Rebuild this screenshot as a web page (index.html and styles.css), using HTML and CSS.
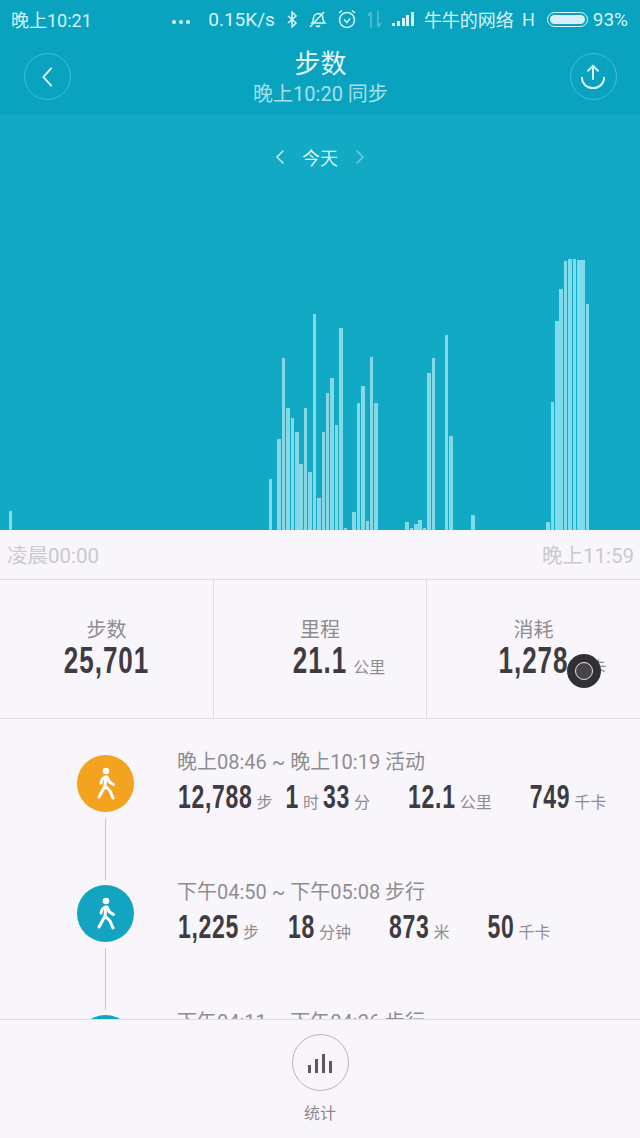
FILE: index.html
```html
<!DOCTYPE html>
<html lang="en">
<head>
    <meta charset="UTF-8">
    <title>步数</title>
    <link rel="stylesheet" href="styles.css">
</head>
<body>
    <div class="screen">
        <div class="top">
            <div class="status-bar">
                <span class="clock">晚上10:21</span>
                <div class="status-right">
                    <span class="dots"><i></i><i></i><i></i></span>
                    <span class="speed">0.15K/s</span>
                    <svg class="st-icon" width="11" height="17" viewBox="0 0 11 17"><path d="M1 5l8 7-4 4V1l4 4-8 7" fill="none" stroke="#d8f3f8" stroke-width="1.6"/></svg>
                    <svg class="st-icon" width="19" height="19" viewBox="0 0 19 19"><path d="M4 13c2-2 1-5 2-7s4-3 6-2 3 3 3 5 1 3 2 4H4zM8 15.500c1 1.500 3 1.500 4 0M2 17L16 2" fill="none" stroke="#d8f3f8" stroke-width="1.500"/></svg>
                    <svg class="st-icon" width="20" height="20" viewBox="0 0 20 20"><circle cx="10" cy="11" r="7.500" fill="none" stroke="#d8f3f8" stroke-width="1.500"/><path d="M7 10.500l3 3 3-4M2 4l3-2.500M18 4l-3-2.500" fill="none" stroke="#d8f3f8" stroke-width="1.500"/></svg>
                    <svg class="st-icon" width="15" height="19" viewBox="0 0 15 19"><path d="M4 18V3M1 6l3-4M11 1v15M14 13l-3 4" fill="none" stroke="#5cc0d3" stroke-width="1.500"/></svg>
                    <svg class="st-icon" width="22" height="14" viewBox="0 0 22 14"><path d="M0 11h3v3H0zM5 9h3v5H5zM10 6h3v8h-3zM14 3h3v11h-3zM19 0h3v14h-3z" fill="#d8f3f8"/></svg>
                    <span class="carrier">牛牛的网络</span>
                    <span class="net">H</span>
                    <span class="battery"><i></i></span>
                    <span class="percent">93%</span>
                </div>
            </div>
            <div class="header">
                <button class="round-btn">
                    <svg width="13" height="22" viewBox="0 0 14 24"><path d="M11.500 2L2.500 12l9 10" fill="none" stroke="#e6f8fb" stroke-width="2"/></svg>
                </button>
                <div class="header-title">
                    <h1>步数</h1>
                    <p>晚上10:20 同步</p>
                </div>
                <button class="round-btn">
                    <svg width="26" height="28" viewBox="0 0 28 30"><path d="M14 18V3M8 9l6-6 6 6M2 15c0 7 5 12 12 12s12-5 12-12" fill="none" stroke="#e6f8fb" stroke-width="2"/></svg>
                </button>
            </div>
        </div>

        <div class="chart">
            <div class="chart-nav">
                <svg width="10" height="16" viewBox="0 0 10 16"><path d="M8.500 1.500L2 8l6.500 6.500" fill="none" stroke="#bdeaf2" stroke-width="1.500"/></svg>
                <span>今天</span>
                <svg width="10" height="16" viewBox="0 0 10 16"><path d="M1.500 1.500L8 8l-6.500 6.500" fill="none" stroke="#6fcde0" stroke-width="1.500"/></svg>
            </div>
            <div class="bars" id="bars"></div>
        </div>

        <div class="axis">
            <span>凌晨00:00</span>
            <span>晚上11:59</span>
        </div>

        <div class="stats">
            <div class="stat">
                <div class="stat-label">步数</div>
                <div class="stat-value"><b>25,701</b></div>
            </div>
            <div class="stat">
                <div class="stat-label">里程</div>
                <div class="stat-value"><b>21.1</b><small>公里</small></div>
            </div>
            <div class="stat">
                <div class="stat-label">消耗</div>
                <div class="stat-value"><b>1,278</b><small>千卡</small></div>
            </div>
        </div>

        <div class="list">
            <div class="entry">
                <div class="rail">
                    <div class="dot dot-orange">
                        <svg width="26" height="34" viewBox="0 0 26 34"><use href="#walker"/></svg>
                    </div>
                    <div class="rail-line"></div>
                </div>
                <div class="entry-body">
                    <div class="entry-time">晚上08:46 ~ 晚上10:19 活动</div>
                    <div class="entry-nums">
                        <span class="num num-short"><b>12,788</b><small>步</small></span>
                        <span class="num"><b>1</b><small>时</small><b>33</b><small>分</small></span>
                        <span class="num"><b>12.1</b><small>公里</small></span>
                        <span class="num"><b>749</b><small>千卡</small></span>
                    </div>
                </div>
            </div>
            <div class="entry">
                <div class="rail">
                    <div class="dot dot-blue">
                        <svg width="26" height="34" viewBox="0 0 26 34"><use href="#walker"/></svg>
                    </div>
                    <div class="rail-line"></div>
                </div>
                <div class="entry-body">
                    <div class="entry-time">下午04:50 ~ 下午05:08 步行</div>
                    <div class="entry-nums">
                        <span class="num num-wide"><b>1,225</b><small>步</small></span>
                        <span class="num"><b>18</b><small>分钟</small></span>
                        <span class="num"><b>873</b><small>米</small></span>
                        <span class="num"><b>50</b><small>千卡</small></span>
                    </div>
                </div>
            </div>
            <div class="entry">
                <div class="rail">
                    <div class="dot dot-blue"></div>
                </div>
                <div class="entry-body">
                    <div class="entry-time">下午04:11 ~ 下午04:26 步行</div>
                </div>
            </div>
        </div>

        <div class="bottom">
            <div class="stats-btn">
                <svg width="24" height="20" viewBox="0 0 24 20"><path d="M0 12h3v8H0zM7 6h3v14H7zM14 1h3v19h-3zM21 8h3v12h-3z" fill="#5d5a5e"/></svg>
            </div>
            <span>统计</span>
        </div>

        <div class="float-ball"><i></i></div>
    </div>

    <svg width="0" height="0" class="defs">
        <symbol id="walker" viewBox="0 0 26 34">
            <circle cx="13" cy="4" r="3.300" fill="#fff"/>
            <path d="M12 10c-2 1-3.500 3-4 6M13 10l-1 9M14 10l2.500 5 4 2.500M12 19l-6 11M12 19l5 5 3 7" fill="none" stroke="#fff" stroke-width="3" stroke-linecap="round" stroke-linejoin="round"/>
        </symbol>
    </svg>

    <script src="chart.js"></script>
</body>
</html>
```

FILE: styles.css
```css
* {
    margin: 0;
    padding: 0;
    box-sizing: border-box;
}

body {
    width: 640px;
    height: 1138px;
    overflow: hidden;
    background: #f9f6fb;
    font-family: Roboto, "Noto Sans CJK SC", sans-serif;
}

.screen {
    position: relative;
    width: 640px;
    height: 1138px;
    display: flex;
    flex-direction: column;
}

.defs {
    position: absolute;
}

/* top blue part */
.top {
    height: 115px;
    background: #09a3c0;
    color: #e3f6fa;
}

.status-bar {
    height: 38px;
    padding: 0 12px 0 11px;
    display: flex;
    align-items: center;
    justify-content: space-between;
    font-size: 18px;
    color: #d8f3f8;
}

.status-right {
    display: flex;
    align-items: center;
}

.dots {
    display: flex;
    gap: 3px;
    margin-right: 18px;
    padding-top: 5px;
}

.dots i {
    width: 4px;
    height: 4px;
    border-radius: 50%;
    background: #e3f6fa;
}

.st-icon {
    margin-left: 10px;
}

.speed {
    margin-right: 2px;
    font-size: 19px;
}

.carrier {
    margin-left: 10px;
}

.net {
    margin-left: 8px;
}

.battery {
    width: 41px;
    height: 15px;
    margin-left: 12px;
    padding: 2px;
    border: 1px solid #e3f6fa;
    border-radius: 8px;
    display: flex;
}

.battery i {
    flex: 1;
    border-radius: 5px;
    background: #d5f1f5;
}

.percent {
    margin-left: 5px;
    font-size: 19px;
}

.header {
    height: 77px;
    padding: 0 23px 0 24px;
    display: flex;
    align-items: flex-start;
    justify-content: space-between;
}

.round-btn {
    width: 47px;
    height: 47px;
    margin-top: 15px;
    border: 1px solid #45bdd2;
    border-radius: 50%;
    background: none;
    display: flex;
    align-items: center;
    justify-content: center;
}

.header-title {
    text-align: center;
}

.header-title h1 {
    font-size: 26px;
    font-weight: 400;
    line-height: 34px;
    margin-top: 9px;
}

.header-title p {
    font-size: 20px;
    line-height: 26px;
    color: #a4e0ea;
}

/* chart */
.chart {
    height: 415px;
    background: #12a9c4;
    display: flex;
    flex-direction: column;
    justify-content: space-between;
}

.chart-nav {
    height: 24px;
    margin-top: 30px;
    display: flex;
    align-items: center;
    justify-content: center;
    gap: 17px;
    font-size: 18px;
    color: #d8f3f8;
}

.bars {
    height: 272px;
    padding-left: 4.250px;
    display: flex;
    align-items: flex-end;
    gap: 0.920px;
}

.bar {
    flex: 0 0 3.500px;
    background: #85d8e5;
}

.bar-bright {
    background: #7fdcec;
}

.axis {
    height: 49px;
    padding: 0 6px 2px 7px;
    display: flex;
    align-items: center;
    justify-content: space-between;
    font-size: 20.500px;
    color: #cbc9cc;
}

/* three totals */
.stats {
    height: 140px;
    border-top: 1px solid #dfdde0;
    border-bottom: 1px solid #dfdde0;
    display: grid;
    grid-template-columns: 214px 213px 1fr;
}

.stat {
    padding-top: 36px;
    border-right: 1px solid #dfdde0;
    text-align: center;
}

.stat:last-child {
    border-right: none;
}

.stat-label {
    font-size: 20px;
    line-height: 28px;
    color: #8f8d90;
}

/* number stays centred under the label, the unit hangs on its right */
.stat-value {
    display: grid;
    grid-template-columns: 1fr auto 1fr;
    align-items: baseline;
    margin-top: 7px;
    color: #3f3c41;
}

.stat-value b {
    grid-column: 2;
    display: inline-block;
    font-family: "Liberation Sans", sans-serif;
    font-size: 26px;
    line-height: 26px;
    letter-spacing: 1px;
    transform: scaleY(1.4);
    transform-origin: 0 80%;
}

.stat-value small {
    margin-left: 6px;
    font-size: 16px;
    text-align: left;
    white-space: nowrap;
    color: #8f8d90;
}

/* activity list */
.list {
    height: 300px;
    padding-top: 36px;
    overflow: hidden;
}

.entry {
    display: flex;
}

.rail {
    width: 57px;
    margin: 0 43px 0 77px;
    display: flex;
    flex-direction: column;
    align-items: center;
}

.dot {
    width: 57px;
    height: 57px;
    border-radius: 50%;
    display: flex;
    align-items: center;
    justify-content: center;
}

.dot-orange {
    background: #f3a31f;
}

.dot-blue {
    background: #13a4c2;
}

.rail-line {
    width: 1px;
    height: 62px;
    margin: 6px 0 5px;
    background: #c9c7ca;
}

.entry-time {
    margin-top: -6px;
    font-size: 20px;
    line-height: 26px;
    white-space: nowrap;
    color: #8f8d90;
}

.entry-nums {
    margin-top: 14px;
    padding-left: 1px;
    display: flex;
    gap: 38px;
    white-space: nowrap;
    color: #3f3c41;
}

.num b {
    display: inline-block;
    font-family: "Liberation Sans", sans-serif;
    font-size: 23px;
    line-height: 23px;
    letter-spacing: 0.7px;
    transform: scaleY(1.46);
    transform-origin: 0 80%;
}

.num small {
    margin: 0 4px;
    font-size: 16px;
    color: #8f8d90;
}

.num small:last-child {
    margin-right: 0;
}

.num-short {
    margin-right: -25px;
}

.num-wide {
    margin-right: -9px;
}

/* bottom bar */
.bottom {
    flex: 1;
    position: relative;
    border-top: 1px solid #dfdde0;
    background: #f9f6fb;
    display: flex;
    flex-direction: column;
    align-items: center;
    font-size: 16px;
    color: #8a888b;
}

.stats-btn {
    width: 57px;
    height: 57px;
    margin-top: 14px;
    margin-bottom: 9px;
    border: 1px solid #b9b7ba;
    border-radius: 50%;
    display: flex;
    align-items: center;
    justify-content: center;
}

/* floating assistive ball */
.float-ball {
    position: absolute;
    left: 567px;
    top: 654px;
    width: 34px;
    height: 34px;
    border-radius: 50%;
    background: #323034;
    display: flex;
    align-items: center;
    justify-content: center;
}

.float-ball i {
    width: 18px;
    height: 18px;
    border: 1.500px solid #e8e6ea;
    border-radius: 50%;
    background: #47454a;
}
```

FILE: chart.js
```js
// [slot, height] for each ten minutes with steps, the rest of the day is empty
const data = [
    [1, 19], [60, 51], [62, 91], [63, 172], [64, 122], [65, 112], [66, 98], [67, 66],
    [68, 122], [69, 58], [70, 216], [71, 32], [72, 98], [73, 137], [74, 152], [75, 105],
    [76, 202], [77, 2], [79, 18], [80, 127], [81, 144], [82, 9], [83, 173], [84, 127],
    [91, 8], [92, 2], [93, 6], [94, 10], [95, 2], [96, 157], [97, 172], [100, 195],
    [101, 94], [106, 15], [123, 8], [124, 128], [125, 209], [126, 241], [127, 269],
    [128, 271], [129, 271], [130, 270], [131, 270], [132, 226]
];

const heights = new Map(data);
const bars = document.getElementById('bars');

for (let i = 0; i < 144; i++) {
    const bar = document.createElement('div');
    bar.className = i > 123 ? 'bar bar-bright' : 'bar';
    bar.style.height = (heights.get(i) || 0) + 'px';
    bars.appendChild(bar);
}
```
